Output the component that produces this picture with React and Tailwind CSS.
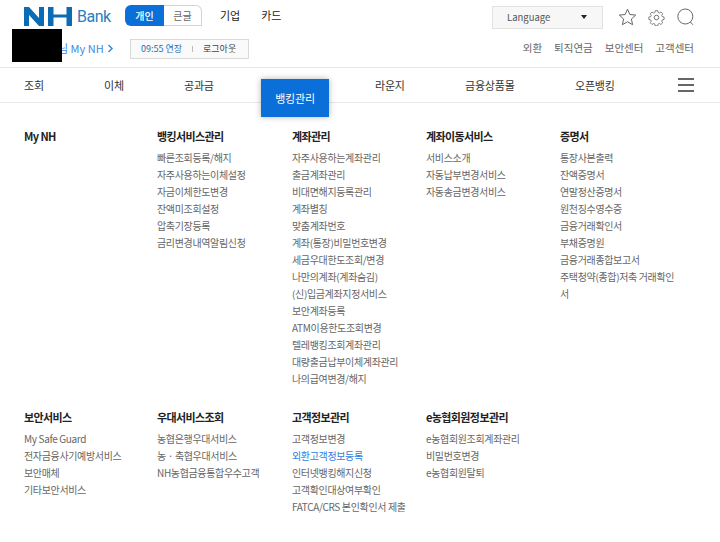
const F = '"Noto Sans CJK KR","Noto Sans",sans-serif';
const cols1 = [
  { t: 'My NH', w: 'w-[133px]', items: [] },
  { t: '뱅킹서비스관리', w: 'w-[135px]', items: ['빠른조회등록/해지','자주사용하는이체설정','자금이체한도변경','잔액미조회설정','압축기장등록','금리변경내역알림신청'] },
  { t: '계좌관리', w: 'w-[134px]', items: ['자주사용하는계좌관리','출금계좌관리','비대면해지등록관리','계좌별칭','맞춤계좌번호','계좌(통장)비밀번호변경','세금우대한도조회/변경','나만의계좌(계좌숨김)','(신)입금계좌지정서비스','보안계좌등록','ATM이용한도조회변경','텔레뱅킹조회계좌관리','대량출금납부이체계좌관리','나의급여변경/해지'] },
  { t: '계좌이동서비스', w: 'w-[134px]', items: ['서비스소개','자동납부변경서비스','자동송금변경서비스'] },
  { t: '증명서', w: 'w-[118px]', items: ['통장사본출력','잔액증명서','연말정산증명서','원천징수영수증','금융거래확인서','부채증명원','금융거래종합보고서','주택청약(종합)저축 거래확인서'] },
];
const cols2 = [
  { t: '보안서비스', w: 'w-[133px]', items: ['My Safe Guard','전자금융사기예방서비스','보안매체','기타보안서비스'] },
  { t: '우대서비스조회', w: 'w-[135px]', items: ['농협은행우대서비스','농 · 축협우대서비스','NH농협금융통합우수고객'] },
  { t: '고객정보관리', w: 'w-[134px]', items: ['고객정보변경','외환고객정보등록','인터넷뱅킹해지신청','고객확인대상여부확인','FATCA/CRS 본인확인서 제출'] },
  { t: 'e농협회원정보관리', w: 'w-[134px]', items: ['e농협회원조회계좌관리','비밀번호변경','e농협회원탈퇴'] },
];

function Col({ c }) {
  return (
    <div className={c.w}>
      <div className="pt-[1px] text-[11px] leading-[16px] font-bold text-[#222] tracking-[-0.6px]">{c.t}</div>
      <ul className="mt-[5px]">
        {c.items.map((i) => (
          <li key={i} className={`text-[10px] leading-[17px] tracking-[-0.35px] break-all ${i === '외환고객정보등록' ? 'text-[#2f7de1]' : 'text-[#666]'}`}>{i}</li>
        ))}
      </ul>
    </div>
  );
}

export default function App() {
  return (
    <div className="w-[720px] h-[542px] bg-white overflow-hidden" style={{ fontFamily: F }}>
      <div className="h-[68px] border-b border-[#e8e8e8] px-[24px] relative">
        <div className="flex items-center h-[34px]">
          <div className="flex items-center w-[101px]">
            <svg width="48" height="19" viewBox="0 0 48 19" className="mt-[-1px]">
              <path d="M0 19V0h5l10 11V0h5v19h-5L5 8v11z" fill="#0b6cb5" />
              <path d="M24 0h5.500v7.500h13V0H48v19h-5.500v-8.500h-13V19H24z" fill="#0b6cb5" />
            </svg>
            <span className="ml-[5px] text-[16px] leading-none text-[#2b7cbf] tracking-[-0.5px]" style={{ fontFamily: '"Roboto",sans-serif' }}>Bank</span>
          </div>
          <div className="flex h-[21px] w-[77px] mt-[-3px] text-[10px]">
            <div className="w-[39px] bg-[#0a6fd8] text-white font-medium flex items-center justify-center rounded-l-[6px]">개인</div>
            <div className="w-[38px] border border-l-0 border-[#d4d4d4] text-[#666] flex items-center justify-center rounded-tr-[6px]">큰글</div>
          </div>
          <div className="ml-[18px] text-[11px] text-[#222] mt-[-3px]">기업</div>
          <div className="ml-[21px] text-[11px] text-[#222] mt-[-3px]">카드</div>
          <div className="ml-auto flex items-center mr-[2px]">
            <div className="w-[111px] h-[23px] border border-[#e2e2e2] bg-[#f7f7f7] flex items-center pl-[14px] pr-[15px] justify-between mr-[15px]">
              <span className="text-[9.5px] text-[#555]">Language</span>
              <span className="w-0 h-0 border-x-[3px] border-x-transparent border-t-[4px] border-t-[#222]"></span>
            </div>
            <svg width="19" height="18" viewBox="0 0 19 18" fill="none" stroke="#666" strokeWidth="1" className="mr-[11px]">
              <path d="M9.500 1.200l2.400 5.300 5.800.6-4.300 3.900 1.200 5.700-5.100-2.900-5.100 2.900 1.200-5.700L1.300 7.100l5.800-.6z" />
            </svg>
            <svg width="17" height="17" viewBox="0 0 24 24" fill="none" stroke="#666" strokeWidth="1.300" className="mr-[12px]">
              <circle cx="12" cy="12" r="3.200" />
              <path d="M10 1.500h4l.7 3 1.900.8 2.600-1.600 2.800 2.800-1.600 2.600.8 1.900 3 .7v4l-3 .7-.8 1.900 1.600 2.600-2.800 2.800-2.600-1.600-1.900.8-.7 3h-4l-.7-3-1.900-.8-2.600 1.600-2.800-2.800 1.600-2.600-.8-1.900-3-.7v-4l3-.7.8-1.900L2 6.500l2.800-2.800 2.600 1.600 1.900-.8z" transform="translate(1.400 1) scale(.88)" />
            </svg>
            <svg width="17" height="18" viewBox="0 0 17 18" fill="none" stroke="#666" strokeWidth="1">
              <circle cx="8.300" cy="8.500" r="7.500" />
              <path d="M13.300 14l2.700 2.800" />
            </svg>
          </div>
        </div>
        <div className="flex items-center h-[33px] relative">
          <div className="absolute left-[-12px] top-[-5px] w-[50px] h-[33px] bg-black"></div>
          <div className="ml-[34px] w-[72px] flex items-center text-[11px] text-[#3d8ae0] mt-[-4px] whitespace-nowrap">
            <span>님 My NH</span>
            <svg width="7" height="9" viewBox="0 0 7 9" fill="none" stroke="#3d8ae0" strokeWidth="1.500" className="ml-[3px]"><path d="M1.500 1l3.500 3.500L1.500 8" /></svg>
          </div>
          <div className="flex items-center w-[119px] h-[20px] border border-[#d9d9d9] bg-[#fafafa] text-[9px] mt-[-4px]">
            <span className="ml-[10px] text-[#2a6fb8]">09:55 연장</span>
            <span className="ml-[10px] mr-[10px] w-px h-[6px] bg-[#bbb]"></span>
            <span className="text-[#444]">로그아웃</span>
          </div>
          <div className="ml-auto flex gap-[12px] text-[10.5px] text-[#666] mt-[-5px] mr-[2px]">
            <span>외환</span><span>퇴직연금</span><span>보안센터</span><span>고객센터</span>
          </div>
        </div>
      </div>
      <div className="h-[35px] border-b border-[#e8e8e8] flex items-center pl-[24px] pr-[26px]">
        <div className="text-[11px] text-[#333] w-[80px] tracking-[-0.2px]">조회</div>
        <div className="text-[11px] text-[#333] w-[80px] tracking-[-0.2px]">이체</div>
        <div className="text-[11px] text-[#333] w-[77px] tracking-[-0.2px]">공과금</div>
        <div className="relative z-10 mt-[-2px] h-[38px] w-[68px] mb-[-16px] bg-[#0a6fd8] text-white text-[11px] tracking-[-0.2px] flex items-center justify-center shadow-[0_0_6px_rgba(0,0,0,0.3)] translate-y-[6px]">뱅킹관리</div>
        <div className="ml-[46px] w-[90px] text-[11px] text-[#333] tracking-[-0.2px]">라운지</div>
        <div className="w-[110px] text-[11px] text-[#333] tracking-[-0.2px]">금융상품몰</div>
        <div className="text-[11px] text-[#333] tracking-[-0.2px]">오픈뱅킹</div>
        <div className="ml-auto flex flex-col gap-[4.500px]">
          <span className="block w-[16px] h-[1.500px] bg-[#666]"></span>
          <span className="block w-[16px] h-[1.500px] bg-[#666]"></span>
          <span className="block w-[16px] h-[1.500px] bg-[#666]"></span>
        </div>
      </div>
      <div className="pl-[24px] pt-[24px]">
        <div className="flex h-[274px]">{cols1.map((c) => <Col key={c.t} c={c} />)}</div>
        <div className="flex mt-[7px]">{cols2.map((c) => <Col key={c.t} c={c} />)}</div>
      </div>
    </div>
  );
}
